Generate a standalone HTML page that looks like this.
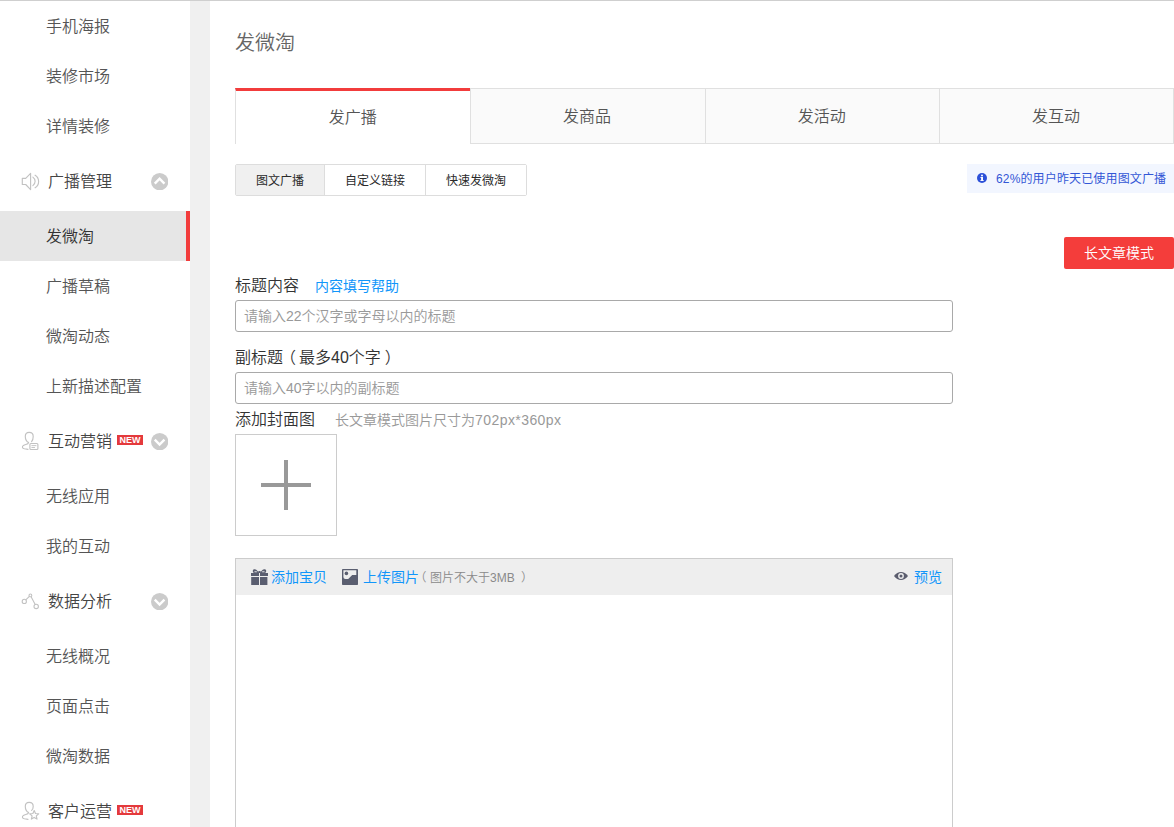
<!DOCTYPE html>
<html lang="zh-CN">
<head>
<meta charset="utf-8">
<title>发微淘</title>
<style>
*{box-sizing:border-box;margin:0;padding:0}
html,body{width:1174px;height:827px;overflow:hidden;background:#fff}
body{font-family:"Liberation Sans","Noto Sans CJK SC",sans-serif;color:#666;position:relative;font-weight:350}
.topline{position:absolute;left:0;top:0;width:1174px;height:1px;background:#cfcfcf;z-index:5}
.side{position:absolute;left:0;top:0;width:190px;height:827px;background:#fff}
.gap{position:absolute;left:190px;top:0;width:20px;height:827px;background:#f0f0f0}
.side .it{position:absolute;left:0;width:190px;height:50px;line-height:52px;padding-left:46px;font-size:16px;color:#555}
.side .it.on{background:#e6e6e6;border-right:4px solid #f23c3c;color:#333}
.side .hd{position:absolute;left:0;width:190px;height:60px;line-height:62px;padding-left:48px;font-size:16px;color:#444}
.side .hd svg.ic{position:absolute;left:20px;top:20px}
.side .hd .arr{position:absolute;left:150.9px;top:21.7px;width:17.4px;height:17.4px}
.side .hd .new{position:absolute;left:117px;top:24px;width:26px;height:10px;background:#e4393c;color:#fff;font-size:9px;line-height:10px;font-weight:700;font-style:normal;text-align:center;letter-spacing:0;font-family:"Liberation Sans",sans-serif}
h1{position:absolute;left:235px;top:29px;font-size:20px;line-height:28px;font-weight:350;color:#666}
.tabs{position:absolute;left:235px;top:88px;height:56px;width:939px;display:flex}
.tab{width:234.75px;height:56px;background:#fafafa;border:1px solid #e0e0e0;border-right:none;font-size:16px;line-height:56px;text-align:center;color:#555;padding-right:1px}
.tab:last-child{border-right:1px solid #e0e0e0}
.tab.on{background:#fff;border-top:3px solid #f23c3c;border-bottom:none;line-height:54px;padding-right:0}
.seg{position:absolute;left:235px;top:164px;height:32px;display:flex;border:1px solid #ddd;border-radius:2px;font-size:12px;color:#2a2a2a;font-weight:400}
.seg div{height:30px;line-height:32px;text-align:center;border-right:1px solid #ddd;background:#fff}
.seg div:last-child{border-right:none}
.seg div.on{background:#f0f0f0}
.info{position:absolute;left:967px;top:164px;width:207px;height:29px;background:#f2f6ff;font-weight:400;color:#3257d6;font-size:12px;line-height:31px;padding-left:29px;white-space:nowrap;letter-spacing:.15px}
.info svg{position:absolute;left:10px;top:9px}
.btn{position:absolute;left:1064px;top:237px;width:110px;height:32px;background:#f43d3b;color:#fff;font-size:14px;line-height:32px;text-align:center;border-radius:2px}
.lb{position:absolute;left:235px;font-size:16px;line-height:22px;color:#333;white-space:nowrap}
.lb a{font-size:14px;color:#1196fa;margin-left:16px;text-decoration:none;font-weight:400}
.lb b{font-weight:inherit;position:relative}
.lb .pl{left:-3px}
.lb .pr{left:4px}
.lb em{font-style:normal;letter-spacing:.43px}
.lb span{font-size:14px;color:#999;margin-left:20px}
.inp{position:absolute;left:235px;width:718px;height:32px;border:1px solid #a9a9a9;border-radius:3px;font-size:14px;line-height:30px;color:#999;padding-left:8px;background:#fff}
.up{position:absolute;left:235px;top:434px;width:102px;height:102px;border:1px solid #ccc;background:#fff}
.up:before{content:"";position:absolute;left:25px;top:48px;width:50px;height:4px;background:#999}
.up:after{content:"";position:absolute;left:48px;top:25px;width:4px;height:50px;background:#999}
.ed{position:absolute;left:235px;top:558px;width:718px;height:300px;border:1px solid #ccc;background:#fff}
.ed .tb{position:absolute;left:0;top:0;width:716px;height:36px;background:#eee;font-size:14px;line-height:36px;color:#1196fa}
.ed .tb span{position:absolute;top:0;white-space:nowrap;font-weight:400}
.ed .tb .g{color:#8a8a8a;font-size:12px;font-weight:350;top:1px}
.ed .tb svg{position:absolute}
</style>
</head>
<body>
<div class="side">
  <div class="it" style="top:1px">手机海报</div>
  <div class="it" style="top:51px">装修市场</div>
  <div class="it" style="top:101px">详情装修</div>
  <div class="hd" style="top:151px"><svg class="ic" style="left:20px;top:20px" width="20" height="22" viewBox="0 0 20 22" fill="none" stroke="#c2c2c2" stroke-width="1.15" stroke-linejoin="round" stroke-linecap="round"><path d="M2.3 7.3H5.7L10.6 2.4V18.6L5.7 13.5H2.3Z"/><path d="M12.9 6.1A5.2 5.2 0 0 1 12.9 14.6M15.1 4.2A7.4 7.4 0 0 1 15.1 16.8"/></svg>广播管理<svg class="arr" viewBox="0 0 17.4 17.4"><circle cx="8.7" cy="8.7" r="8.7" fill="#cbcbcb"/><path d="M3.75 10.55L8.6 5.7L13.45 10.55" fill="none" stroke="#fff" stroke-width="2.4"/></svg></div>
  <div class="it on" style="top:211px">发微淘</div>
  <div class="it" style="top:261px">广播草稿</div>
  <div class="it" style="top:311px">微淘动态</div>
  <div class="it" style="top:361px">上新描述配置</div>
  <div class="hd" style="top:411px"><svg class="ic" style="left:20px;top:19px" width="20" height="22" viewBox="0 0 20 22" fill="none" stroke="#c2c2c2" stroke-width="1.15" stroke-linejoin="round" stroke-linecap="round"><path d="M11.6 11.6C12.8 10.2 13.2 8.6 13.2 6.4C13.2 3.6 11.6 2.4 9.2 2.4C6.8 2.4 5.3 3.6 5.3 6.4C5.3 9.4 6 11 8.6 12.6C8.2 14.6 5.4 14.2 3.4 15.4C1.8 16.6 2.2 18.2 4.4 18.8L8 19.4"/><rect x="9.9" y="13.5" width="8" height="6" rx="1"/><path d="M11.8 15.6H16M11.8 17.5H14.6" stroke-width="0.9"/></svg>互动营销<i class="new">NEW</i><svg class="arr" viewBox="0 0 17.4 17.4"><circle cx="8.7" cy="8.7" r="8.7" fill="#cbcbcb"/><path d="M3.75 6.7L8.6 11.55L13.45 6.7" fill="none" stroke="#fff" stroke-width="2.4"/></svg></div>
  <div class="it" style="top:471px">无线应用</div>
  <div class="it" style="top:521px">我的互动</div>
  <div class="hd" style="top:571px"><svg class="ic" style="left:20px;top:19px" width="20" height="22" viewBox="0 0 20 22" fill="none" stroke="#c2c2c2" stroke-width="1.1"><circle cx="4.3" cy="11.4" r="2.1"/><circle cx="10.4" cy="5.4" r="1.4"/><circle cx="16.2" cy="16.4" r="2.2"/><path d="M5.8 9.9L9.4 6.4M11.1 6.7L15.2 14.4"/></svg>数据分析<svg class="arr" viewBox="0 0 17.4 17.4"><circle cx="8.7" cy="8.7" r="8.7" fill="#cbcbcb"/><path d="M3.75 6.7L8.6 11.55L13.45 6.7" fill="none" stroke="#fff" stroke-width="2.4"/></svg></div>
  <div class="it" style="top:631px">无线概况</div>
  <div class="it" style="top:681px">页面点击</div>
  <div class="it" style="top:731px">微淘数据</div>
  <div class="hd" style="top:781px"><svg class="ic" style="left:20px;top:19px" width="20" height="22" viewBox="0 0 20 22" fill="none" stroke="#c2c2c2" stroke-width="1.15" stroke-linejoin="round" stroke-linecap="round"><path d="M11.6 10.4C12.8 9.4 13.2 8.2 13.2 6.4C13.2 3.6 11.6 2.4 9.2 2.4C6.8 2.4 5.3 3.6 5.3 6.4C5.3 9.4 6 11 8.6 12.6C8.2 14.6 5.4 14.2 3.4 15.4C1.8 16.6 2.2 18.2 4.4 18.8L8 19.4"/><path d="M14.2 10.6L15.5 13.5L18.7 13.8L16.3 15.9L17 19.1L14.2 17.4L11.4 19.1L12.1 15.9L9.7 13.8L12.9 13.5Z"/></svg>客户运营<i class="new">NEW</i></div>
</div>
<div class="gap"></div>
<div class="topline"></div>
<h1>发微淘</h1>
<div class="tabs">
  <div class="tab on">发广播</div><div class="tab">发商品</div><div class="tab">发活动</div><div class="tab">发互动</div>
</div>
<div class="seg"><div class="on" style="width:89px">图文广播</div><div style="width:101px">自定义链接</div><div style="width:100px">快速发微淘</div></div>
<div class="info"><svg width="10" height="10" viewBox="0 0 10 10"><circle cx="5" cy="5" r="5" fill="#2c50d8"/><rect x="4.1" y="4" width="1.9" height="3.8" fill="#fff"/><rect x="3.4" y="4" width="2" height="0.9" fill="#fff"/><rect x="3.4" y="7" width="3.3" height="0.9" fill="#fff"/><circle cx="5" cy="2.4" r="1" fill="#fff"/></svg>62%的用户昨天已使用图文广播</div>
<div class="btn">长文章模式</div>
<div class="lb" style="top:275px">标题内容<a>内容填写帮助</a></div>
<div class="inp" style="top:300px">请输入22个汉字或字母以内的标题</div>
<div class="lb" style="top:347px">副标题<b class="pl">（</b>最多40个字<b class="pr">）</b></div>
<div class="inp" style="top:372px">请输入40字以内的副标题</div>
<div class="lb" style="top:409px">添加封面图<span>长文章模式图片尺寸为<em>702px*360px</em></span></div>
<div class="up"></div>
<div class="ed"><div class="tb">
  <svg style="left:15px;top:10px" width="17" height="16" viewBox="0 0 17 16"><g fill="#5a5e70"><path d="M8.3 4L5.6 1C4.6 -0.1 2.3 -0.1 1.9 1.3C1.6 2.6 2.1 4 3 4ZM8.7 4L11.4 1C12.4 -0.1 14.7 -0.1 15.1 1.3C15.4 2.6 14.9 4 14 4Z"/><rect x="7.4" y="2" width="2.2" height="2"/><rect x="0" y="4" width="8" height="3"/><rect x="9" y="4" width="8" height="3"/><rect x="0.2" y="8" width="7.8" height="8"/><rect x="9" y="8" width="7.4" height="8"/></g><ellipse cx="4.7" cy="2.7" rx="1.5" ry="0.55" fill="#eee"/><ellipse cx="12.3" cy="2.7" rx="1.5" ry="0.55" fill="#eee"/></svg>
  <svg style="left:106px;top:10px" width="16" height="16" viewBox="0 0 16 16"><rect width="16" height="16" rx="0.8" fill="#5a5e70"/><path d="M1.4 1.2H14.3V6H10.2L6.2 9.9H3.4Q1.4 9.9 1.4 7.9Z" fill="#eee"/><circle cx="4.4" cy="4.4" r="1.8" fill="#5a5e70"/></svg>
  <svg style="left:658px;top:13px" width="14" height="8" viewBox="0 0 14 8"><path d="M0 4C2 1.2 4.4 0 7 0C9.6 0 12 1.2 14 4C12 6.8 9.6 8 7 8C4.4 8 2 6.8 0 4Z" fill="#5b5d6e"/><circle cx="7" cy="4" r="2.9" fill="#eee"/><circle cx="7" cy="4" r="1.5" fill="#5b5d6e"/></svg>
  <span style="left:35px">添加宝贝</span>
  <span style="left:127px">上传图片</span>
  <span class="g" style="left:178.5px">（</span><span class="g" style="left:194px">图片不大于3MB</span><span class="g" style="left:285px">）</span>
  <span style="left:678px">预览</span>
</div></div>
</body>
</html>
